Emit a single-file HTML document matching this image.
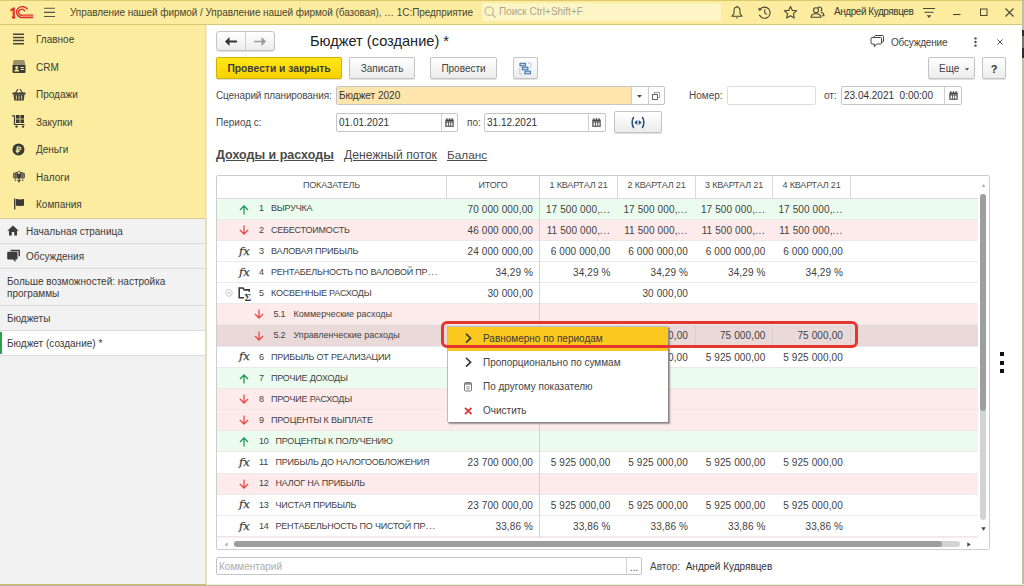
<!DOCTYPE html>
<html lang="ru">
<head>
<meta charset="utf-8">
<title>Бюджет (создание) * — 1С:Предприятие</title>
<style>
*{box-sizing:border-box;margin:0;padding:0}
html,body{width:1024px;height:586px;overflow:hidden;background:#fff}
body{font-family:"Liberation Sans",sans-serif;font-size:10px;color:#3a3a3a;position:relative}
.abs{position:absolute}
.t{position:absolute;white-space:nowrap;line-height:12px}
/* window frame */
#frame-top{left:0;top:0;width:1024px;height:1px;background:#dbc96f}
#frame-right{left:1022px;top:0;width:2px;height:586px;background:#bdbfa8}
#frame-bottom{left:0;top:584px;width:1024px;height:2px;background:#b7baa3;border-top:1px solid #f1ecd2}
/* title bar */
#titlebar{left:0;top:0;width:1022px;height:25px;background:#fbec9f;border-bottom:1px solid #d9c873;border-top:1px solid #d9cc85}
#search{left:482px;top:3px;width:239px;height:18px;background:#fdf5c6;border-radius:2px}
/* sidebar */
#sections{left:0;top:25px;width:207px;height:193px;background:#fbec9f;border-right:1px solid #f2edd6;box-shadow:inset -1px 0 0 #eedd92}
#sideborder{left:205px;top:218px;width:2px;height:366px;background:#e6dfba}
#panel{left:0;top:218px;width:205px;height:366px;background:#f2f2f2;border-top:1px solid #d5cf9c}
.sec{position:absolute;left:36px;white-space:nowrap;line-height:12px;color:#3d3d33}
.pi{position:absolute;left:0;width:205px;border-bottom:1px solid #dcdcdc;color:#3a3a3a}
.pi span{position:absolute;white-space:nowrap;line-height:12px}
/* main */
.btn{position:absolute;border:1px solid #c3c3c3;border-radius:2px;background:linear-gradient(#ffffff,#ececec);box-shadow:0 1px 0 rgba(0,0,0,.12);text-align:center;color:#444;white-space:nowrap}
.inp{position:absolute;border:1px solid #c5c5c5;border-radius:2px;background:#fff}
.lbl{position:absolute;white-space:nowrap;line-height:12px;color:#4a4a4a}
/* table */
#grid{left:216px;top:175px;width:774px;height:375px;border-radius:2px;border:1px solid #cdcdcd;background:#fff;overflow:hidden}
.row{position:absolute;left:0;width:761px;border-bottom:1px solid #ebe9e9}
.g{background:#ebfcee}
.p{background:#fdeaea}
.s{background:#e9d9d9}
.hd{position:absolute;top:0;height:22px;line-height:19px;font-size:9px;letter-spacing:-.15px;color:#4d4d4d;text-align:center;border-right:1px solid #d9d9d9;white-space:nowrap}
.lc{letter-spacing:0!important}
.nm i{font-style:normal;letter-spacing:.9px;margin-left:.5px}
.nm{position:absolute;font-size:9px;letter-spacing:-.2px;line-height:12px;white-space:nowrap;color:#424242}
.num i{font-style:normal;letter-spacing:.7px}
.num{position:absolute;font-size:10px;letter-spacing:.12px;line-height:12px;white-space:nowrap;text-align:right;color:#424242}
.vl{position:absolute;width:1px;background:#d4d4d4}
.ic{position:absolute}
.fx{font-family:"DejaVu Serif","Liberation Serif",serif;font-style:italic;font-size:11.5px;line-height:16px;color:#3c3c3c;letter-spacing:0;-webkit-text-stroke:.25px #3c3c3c}
/* menu */
#menu{left:447px;top:326px;width:221px;height:96px;background:#fff;border:1px solid #b9bcc0;border-right:0;border-bottom:0;box-shadow:1.5px 1.5px 0 #8d8789,2px 2px 2px rgba(0,0,0,.25)}
.mi{position:absolute;left:35px;white-space:nowrap;line-height:12px;color:#444}
</style>
</head>
<body>

<!-- ===== title bar ===== -->
<div id="titlebar" class="abs"></div>
<div id="search" class="abs"></div>
<svg class="abs" style="left:9px;top:5.8px" width="26" height="13.2" viewBox="0 0 26 14" preserveAspectRatio="none">
  <clipPath id="one"><path d="M0 0H8V10.5H6.2V14H2.9V10.5H0z"/></clipPath>
  <text x=".4" y="12.8" clip-path="url(#one)" style="font-family:'Liberation Sans',sans-serif;font-size:16px" fill="#e0302c" stroke="#e0302c" stroke-width=".9" textLength="8" lengthAdjust="spacingAndGlyphs">1</text>
  <g fill="none" stroke="#df2a2a" stroke-width="1.35">
    <path d="M15.8 5.6 A3.2 3.2 0 1 0 13.4 9.7 H24.2"/>
    <path d="M18.6 3.6 A5.9 5.9 0 1 0 13.4 12.4 H24.2"/>
  </g>
  <rect x="13.4" y="10.4" width="10.8" height="1.3" fill="#f0906a"/>
</svg>
<svg class="abs" style="left:44px;top:7px" width="12" height="11" viewBox="0 0 12 11"><path d="M0 1.2H11M0 5.4H11M0 9.5H11" stroke="#55554a" stroke-width="1.1"/></svg>
<div class="t" style="left:70px;top:7px;font-size:10px;letter-spacing:-.065px;color:#4a4632">Управление нашей фирмой / Управление нашей фирмой (базовая), … 1С:Предприятие</div>
<svg class="abs" style="left:484px;top:6px" width="13" height="13" viewBox="0 0 13 13"><circle cx="5.2" cy="5.2" r="4.2" fill="none" stroke="#b9b397" stroke-width="1.1"/><path d="M8.3 8.3L11.6 11.6" stroke="#b9b397" stroke-width="1.3"/></svg>
<div class="t" style="left:499px;top:6px;color:#aaa58c">Поиск Ctrl+Shift+F</div>
<!-- bell -->
<svg class="abs" style="left:730px;top:5px" width="14" height="15" viewBox="0 0 14 15"><path d="M7 2C5 2 4 3.7 4 5.7v2.8L1.9 11.3h10.2L10 8.5V5.7C10 3.7 9 2 7 2z" fill="none" stroke="#4a4636" stroke-width="1.1" stroke-linejoin="round"/><path d="M5.6 12.5h2.8L7 13.8z" fill="#4a4636"/><circle cx="7" cy="1.5" r=".7" fill="#4a4636"/></svg>
<!-- history -->
<svg class="abs" style="left:757px;top:5px" width="15" height="15" viewBox="0 0 15 15"><path d="M3.1 4.2A5.6 5.6 0 1 1 2.3 9.8" fill="none" stroke="#4a4636" stroke-width="1.1"/><path d="M1.2 2.4l.6 3.4 3.3-.9z" fill="#4a4636"/><path d="M7.7 4.3V7.9l2.3 1.5" fill="none" stroke="#4a4636" stroke-width="1.1"/></svg>
<!-- star -->
<svg class="abs" style="left:783px;top:5px" width="15" height="15" viewBox="0 0 15 15"><path d="M7.5 1.4l1.8 4 4.3.4-3.2 2.9.9 4.3-3.8-2.2-3.8 2.2.9-4.3L1.4 5.8l4.3-.4z" fill="none" stroke="#4a4636" stroke-width="1.1" stroke-linejoin="round"/></svg>
<!-- users -->
<svg class="abs" style="left:810px;top:5px" width="15" height="15" viewBox="0 0 15 15"><g fill="none" stroke="#4a4636" stroke-width="1.1"><path d="M7.7 2.9a2.3 2.3 0 1 1 3 3.4M11 7.2c1.9.4 2.9 1.6 3 3.6H11.8"/><circle cx="6" cy="5.3" r="2.5"/><path d="M1 12.2c.2-2.3 1.8-3.5 5-3.5s4.8 1.2 5 3.5z"/></g></svg>
<div class="t" style="left:834px;top:6px;letter-spacing:-.45px;color:#3d3a2c">Андрей Кудрявцев</div>
<!-- menu lines -->
<svg class="abs" style="left:923px;top:7px" width="12" height="12" viewBox="0 0 13 13"><path d="M0 1.7H13M1.5 5.7H11.5" stroke="#4a4636" stroke-width="1.1"/><path d="M4 9l2.5 2.8L9 9z" fill="#4a4636"/></svg>
<svg class="abs" style="left:952px;top:6px" width="9" height="13" viewBox="0 0 9 13"><path d="M1 8.5H8.5" stroke="#4a4636" stroke-width="1.1"/></svg>
<svg class="abs" style="left:979px;top:8px" width="9" height="9" viewBox="0 0 9 9"><rect x="1.5" y="1" width="6.5" height="6.5" fill="none" stroke="#4a4636" stroke-width="1"/></svg>
<svg class="abs" style="left:1004px;top:7px" width="11" height="11" viewBox="0 0 11 11"><path d="M1.5 1.5l8 8M9.5 1.5l-8 8" stroke="#4a4636" stroke-width="1.1"/></svg>

<!-- ===== sidebar ===== -->
<div id="sections" class="abs"></div>
<div id="panel" class="abs"></div>
<div id="sideborder" class="abs"></div>

<div class="sec" style="top:34px">Главное</div>
<div class="sec" style="top:61.5px">CRM</div>
<div class="sec" style="top:89px">Продажи</div>
<div class="sec" style="top:116.5px">Закупки</div>
<div class="sec" style="top:144px">Деньги</div>
<div class="sec" style="top:171.5px">Налоги</div>
<div class="sec" style="top:199px">Компания</div>

<!-- section icons -->
<svg class="abs" style="left:12px;top:33px" width="13" height="13" viewBox="0 0 13 13"><path d="M1 1.2H12M1 4.4H12M1 7.6H12M1 10.8H12" stroke="#44443a" stroke-width="1.5"/></svg>
<svg class="abs" style="left:12px;top:60px" width="14" height="14" viewBox="0 0 14 14"><path d="M1.5 1H12.5M1 3H13" stroke="#3b3b36" stroke-width="1"/><rect x="0.5" y="4.5" width="13" height="8.5" rx="1" fill="#3b3b36"/><circle cx="4.7" cy="7.6" r="1.4" fill="#fbec9f"/><path d="M2.3 11.6c0-1.6 1-2.3 2.4-2.3s2.4.7 2.4 2.3z" fill="#fbec9f"/><path d="M8.5 7.5H11.8M8.5 9.5H11.8" stroke="#fbec9f" stroke-width="1"/></svg>
<svg class="abs" style="left:12px;top:88px" width="14" height="13" viewBox="0 0 14 13"><path d="M3.5 5L6 1M10.5 5L8 1" stroke="#3b3b36" stroke-width="1.1" fill="none"/><rect x="0.5" y="4.5" width="13" height="2" fill="#3b3b36"/><path d="M1.5 6.5H12.5L11.7 12.5H2.3z" fill="#3b3b36"/><path d="M4.3 7.5V11.5M7 7.5V11.5M9.7 7.5V11.5" stroke="#fbec9f" stroke-width=".9"/></svg>
<svg class="abs" style="left:12px;top:115px" width="14" height="13" viewBox="0 0 14 13"><path d="M0 .8H2.5V9.5H12.5" fill="none" stroke="#3b3b36" stroke-width="1.2"/><rect x="4" y="0" width="3.6" height="3.6" fill="#3b3b36"/><rect x="8.4" y="0" width="3.6" height="3.6" fill="#3b3b36"/><rect x="4" y="4.4" width="3.6" height="3.6" fill="#3b3b36"/><rect x="8.4" y="4.4" width="3.6" height="3.6" fill="#3b3b36"/><circle cx="4.5" cy="11.6" r="1.2" fill="#3b3b36"/><circle cx="11" cy="11.6" r="1.2" fill="#3b3b36"/></svg>
<svg class="abs" style="left:12px;top:143px" width="13" height="13" viewBox="0 0 13 13"><circle cx="6.5" cy="6.5" r="6" fill="#3b3b36"/><text x="4" y="10" font-family="Liberation Sans, sans-serif" font-weight="bold" font-size="9" fill="#fbec9f">₽</text></svg>
<svg class="abs" style="left:13px;top:170px" width="12" height="13" viewBox="0 0 12 13"><g fill="#3f3f3a"><path d="M6 .4l.9 1L6 2.3l-.9-.9z"/><circle cx="4.1" cy="2.7" r="1.050"/><circle cx="7.9" cy="2.7" r="1.050"/><path d="M5.3 4.6C4 2.3 1.2 2 .2 3.5V7.8c.9 1 2.1 1.2 3.3.8L5.3 7.2z"/><path d="M6.7 4.6C8 2.3 10.8 2 11.8 3.5V7.8c-.9 1-2.1 1.2-3.3.8L6.7 7.2z"/><ellipse cx="6" cy="6.5" rx="1.5" ry="3"/><path d="M3.6 9.3L6 12.8 8.400 9.3 6 10.2z"/><circle cx="2.3" cy="10.3" r=".75"/><circle cx="9.7" cy="10.3" r=".75"/></g><path d="M1.7 3.3V8.2M3.2 3.2V8.6M10.3 3.3V8.2M8.8 3.2V8.6" stroke="#fbec9f" stroke-width=".45"/></svg>
<svg class="abs" style="left:13px;top:198px" width="12" height="12" viewBox="0 0 12 12"><path d="M1.7 .5V11.500" stroke="#3b3b36" stroke-width="1.3"/><path d="M2.9 1.2c1.800-.9 3.2.7 5 .3S10.2.8 11 1.2V8c-.8-.4-1.7-.4-3.1 0S4.7 7.2 2.9 8z" fill="#3b3b36"/></svg>

<!-- open windows panel -->
<div class="pi" style="top:219px;height:25px"><span style="left:26px;top:7px">Начальная страница</span></div>
<div class="pi" style="top:244px;height:25px"><span style="left:26px;top:7px">Обсуждения</span></div>
<div class="pi" style="top:269px;height:37px"><span style="left:7px;top:7px">Больше возможностей: настройка</span><span style="left:7px;top:19px">программы</span></div>
<div class="pi" style="top:306px;height:25px"><span style="left:7px;top:7px">Бюджеты</span></div>
<div class="pi" style="top:331px;height:25px;background:#fff"><span style="left:7px;top:7px">Бюджет (создание) *</span></div>
<div class="abs" style="left:0;top:332px;width:2px;height:22px;background:#2ca04a"></div>
<svg class="abs" style="left:7px;top:225px" width="12" height="11" viewBox="0 0 12 11"><path d="M6 .5L.3 5.8H2V10.5H4.8V7H7.2V10.5H10V5.8H11.7z" fill="#3d3d3d"/></svg>
<svg class="abs" style="left:7px;top:249px" width="14" height="14" viewBox="0 0 14 14"><path d="M3.5 .8H12Q13 .8 13 1.8V6.5Q13 7.5 12 7.5H11.5V2.3H3.5z" fill="#3d3d3d"/><path d="M1.2 2.8H9.5Q10.5 2.8 10.5 3.8V9.5Q10.5 10.5 9.5 10.5H8.5V13L6 10.5H1.2Q.2 10.5 .2 9.5V3.8Q.2 2.8 1.2 2.8z" fill="#3d3d3d"/></svg>

<!-- ===== main area ===== -->
<!-- nav buttons -->
<div class="btn" style="left:216px;top:31px;width:59px;height:20px;border-radius:3px"></div>
<div class="abs" style="left:245px;top:32px;width:1px;height:18px;background:#d0d0d0"></div>
<svg class="abs" style="left:225px;top:37px" width="12" height="9" viewBox="0 0 12 9"><path d="M4.5 0L0 4.5 4.5 9V5.5H12V3.5H4.5z" fill="#333"/></svg>
<svg class="abs" style="left:254px;top:37px" width="12" height="9" viewBox="0 0 12 9"><path d="M7.5 0L12 4.5 7.5 9V5.3H0V3.7H7.5z" fill="#9a9a9a"/></svg>
<div class="t" style="left:310px;top:32px;font-size:14.6px;line-height:18px;color:#222">Бюджет (создание) *</div>

<!-- discuss / more / close -->
<svg class="abs" style="left:870px;top:35px" width="15" height="13" viewBox="0 0 15 13"><g fill="none" stroke="#444" stroke-width="1"><path d="M4.5 2.5V1.5Q4.5 .5 5.5 .5H12.5Q13.5 .5 13.5 1.5V6Q13.5 7 12.5 7H12"/><path d="M2 2.5H10.5Q11.5 2.5 11.5 3.5V8Q11.5 9 10.5 9H6.5L4.300 11.8V9H2Q1 9 1 8V3.5Q1 2.5 2 2.5z" fill="#fff"/></g></svg>
<div class="t" style="left:891px;top:37px;letter-spacing:-.2px;color:#444">Обсуждение</div>
<svg class="abs" style="left:974px;top:37px" width="3" height="10" viewBox="0 0 3 10"><circle cx="1.5" cy="1.4" r="1.2" fill="#4a4a4a"/><circle cx="1.5" cy="5" r="1.2" fill="#4a4a4a"/><circle cx="1.5" cy="8.6" r="1.2" fill="#4a4a4a"/></svg>
<svg class="abs" style="left:997px;top:39px" width="6" height="6" viewBox="0 0 6 6"><path d="M.4.4l5.2 5.2M5.6.4l-5.2 5.2" stroke="#555" stroke-width="1"/></svg>

<!-- command bar -->
<div class="btn" style="left:216px;top:57px;width:126px;height:22px;line-height:22px;font-weight:bold;font-size:10.3px;color:#3b3b3b;background:linear-gradient(#ffe81a,#f7d000);border-color:#d2b100">Провести и закрыть</div>
<div class="btn" style="left:349px;top:57px;width:66px;height:22px;line-height:22px">Записать</div>
<div class="btn" style="left:430px;top:57px;width:67px;height:22px;line-height:22px">Провести</div>
<div class="btn" style="left:513px;top:57px;width:25px;height:22px"></div>
<svg class="abs" style="left:519px;top:62px" width="13" height="13" viewBox="0 0 13 13"><g fill="#c9dcee" stroke="#3a6fa6" stroke-width="1"><rect x="1" y="1.3" width="5.6" height="2.6"/><rect x="3.3" y="5.2" width="5.6" height="2.6"/><rect x="5.8" y="9.2" width="5.6" height="2.6"/></g><path d="M9 1H11.8V6M.8 6V12H3.5" fill="none" stroke="#8fb3d6" stroke-width=".9" stroke-dasharray="1.5 .7"/></svg>
<div class="btn" style="left:928px;top:57px;width:47px;height:22px;line-height:22px;text-align:left;padding-left:10px">Еще</div>
<svg class="abs" style="left:965px;top:68px" width="4" height="3" viewBox="0 0 4 3"><path d="M0 .3H4L2 2.5z" fill="#444"/></svg>
<div class="btn" style="left:982px;top:57px;width:24px;height:22px;line-height:22px;font-weight:bold;font-size:11px;color:#333">?</div>

<!-- row 1 -->
<div class="lbl" style="left:216px;top:90px;letter-spacing:-.11px">Сценарий планирования:</div>
<div class="inp" style="left:336px;top:86px;width:329px;height:19px"></div>
<div class="abs" style="left:337px;top:87px;width:294px;height:17px;background:#fde5ab"></div>
<div class="t" style="left:339px;top:90px;color:#333">Бюджет 2020</div>
<div class="abs" style="left:631px;top:87px;width:1px;height:17px;background:#d0d0d0"></div>
<div class="abs" style="left:648px;top:87px;width:1px;height:17px;background:#d0d0d0"></div>
<svg class="abs" style="left:637px;top:95px" width="5" height="3" viewBox="0 0 5 3"><path d="M0 0H5L2.5 2.8z" fill="#444"/></svg>
<svg class="abs" style="left:652px;top:92px" width="8" height="8" viewBox="0 0 8 8"><rect x="2.5" y=".5" width="5" height="5" fill="#fff" stroke="#9a9a9a" stroke-width=".9"/><rect x=".5" y="2.5" width="5" height="5" fill="#fff" stroke="#555" stroke-width=".9"/></svg>
<div class="lbl" style="left:689px;top:90px">Номер:</div>
<div class="inp" style="left:727px;top:86px;width:89px;height:19px;border-color:#dcdcdc"></div>
<div class="lbl" style="left:824px;top:90px">от:</div>
<div class="inp" style="left:841px;top:86px;width:121px;height:19px"></div>
<div class="t" style="left:844px;top:90px;color:#333;white-space:pre">23.04.2021  0:00:00</div>
<div class="abs" style="left:944px;top:87px;width:1px;height:17px;background:#d0d0d0"></div>
<svg class="abs" style="left:949px;top:91px" width="9" height="9" viewBox="0 0 9 9"><path d="M.3 1.6H8.7V8.8H.3z" fill="#474747"/><path d="M1.9 .2V2M4.5 .2V2M7.1 .2V2" stroke="#474747" stroke-width="1.3"/><path d="M1.2 3.1H7.8V3.9H1.2z" fill="#8a8a8a"/><path d="M1.5 4.5H3V7.8H1.5zM3.8 4.5H5.3V7.8H3.8zM6.1 4.5H7.600V7.8H6.1z" fill="#f4f4f4"/></svg>

<!-- row 2 -->
<div class="lbl" style="left:216px;top:117px">Период с:</div>
<div class="inp" style="left:336px;top:113px;width:122px;height:19px"></div>
<div class="t" style="left:339px;top:117px;color:#333">01.01.2021</div>
<div class="abs" style="left:441px;top:114px;width:1px;height:17px;background:#d0d0d0"></div>
<svg class="abs" style="left:445px;top:118px" width="9" height="9" viewBox="0 0 9 9"><path d="M.3 1.6H8.7V8.8H.3z" fill="#474747"/><path d="M1.9 .2V2M4.5 .2V2M7.1 .2V2" stroke="#474747" stroke-width="1.3"/><path d="M1.2 3.1H7.8V3.9H1.2z" fill="#8a8a8a"/><path d="M1.5 4.5H3V7.8H1.5zM3.8 4.5H5.3V7.8H3.8zM6.1 4.5H7.600V7.8H6.1z" fill="#f4f4f4"/></svg>
<div class="lbl" style="left:467px;top:117px">по:</div>
<div class="inp" style="left:484px;top:113px;width:122px;height:19px"></div>
<div class="t" style="left:487px;top:117px;color:#333">31.12.2021</div>
<div class="abs" style="left:588px;top:114px;width:1px;height:17px;background:#d0d0d0"></div>
<svg class="abs" style="left:592px;top:118px" width="9" height="9" viewBox="0 0 9 9"><path d="M.3 1.6H8.7V8.8H.3z" fill="#474747"/><path d="M1.9 .2V2M4.5 .2V2M7.1 .2V2" stroke="#474747" stroke-width="1.3"/><path d="M1.2 3.1H7.8V3.9H1.2z" fill="#8a8a8a"/><path d="M1.5 4.5H3V7.8H1.5zM3.8 4.5H5.3V7.8H3.8zM6.1 4.5H7.600V7.8H6.1z" fill="#f4f4f4"/></svg>
<div class="btn" style="left:614px;top:111px;width:48px;height:22px"></div>
<svg class="abs" style="left:630px;top:116px" width="16" height="13" viewBox="0 0 16 13"><path d="M3.8 1C1.6 3.6 1.6 9.4 3.8 12M12.2 1C14.4 3.6 14.4 9.4 12.2 12" fill="none" stroke="#1f4e79" stroke-width="1.5"/><path d="M7.3 4V9L4.3 6.5zM8.7 4V9L11.7 6.5z" fill="#1f4e79"/></svg>

<!-- tabs -->
<div class="t" style="left:216px;top:148px;font-size:12.5px;line-height:15px;font-weight:bold;color:#4a4a4a;text-decoration:underline">Доходы и расходы</div>
<div class="t" style="left:344px;top:148px;font-size:12.2px;line-height:15px;color:#4a4a4a;text-decoration:underline">Денежный поток</div>
<div class="t" style="left:447px;top:148px;font-size:11.8px;line-height:15px;color:#4a4a4a;text-decoration:underline">Баланс</div>

<!-- ===== grid ===== -->
<div id="grid" class="abs">
<div id="gridbody">
<div class="hd" style="left:0px;width:230px">ПОКАЗАТЕЛЬ</div>
<div class="hd" style="left:230px;width:93px">ИТОГО</div>
<div class="hd" style="left:323px;width:78px">1 КВАРТАЛ 21</div>
<div class="hd" style="left:401px;width:78px">2 КВАРТАЛ 21</div>
<div class="hd" style="left:479px;width:77px">3 КВАРТАЛ 21</div>
<div class="hd" style="left:556px;width:78px">4 КВАРТАЛ 21</div>
<div class="abs" style="left:0;top:22px;width:761px;height:1px;background:#dcdcdc"></div>
<div class="row g" style="top:23px;height:21px">
<svg class="ic" style="left:22px;top:5.5px" width="10" height="10" viewBox="0 0 10 10"><path d="M5 9.5V1.2M1 5L5 1l4 4" fill="none" stroke="#1a9850" stroke-width="1.25"/></svg>
<span class="nm" style="left:42px;top:3px">1</span>
<span class="nm" style="left:54px;top:3px">ВЫРУЧКА</span>
<span class="num" style="right:445px;top:4.7px">70 000 000,00</span>
<span class="num" style="right:367.5px;top:4.7px">17 500 000,<i>...</i></span>
<span class="num" style="right:290px;top:4.7px">17 500 000,<i>...</i></span>
<span class="num" style="right:212.5px;top:4.7px">17 500 000,<i>...</i></span>
<span class="num" style="right:135px;top:4.7px">17 500 000,<i>...</i></span>
</div>
<div class="row p" style="top:44px;height:21px">
<svg class="ic" style="left:22px;top:5.1px" width="10" height="10" viewBox="0 0 10 10"><path d="M5 .5V8.8M1 5l4 4 4-4" fill="none" stroke="#ee4646" stroke-width="1.25"/></svg>
<span class="nm" style="left:42px;top:4px">2</span>
<span class="nm" style="left:54px;top:4px">СЕБЕСТОИМОСТЬ</span>
<span class="num" style="right:445px;top:4.7px">46 000 000,00</span>
<span class="num" style="right:367.5px;top:4.7px">11 500 000,<i>...</i></span>
<span class="num" style="right:290px;top:4.7px">11 500 000,<i>...</i></span>
<span class="num" style="right:212.5px;top:4.7px">11 500 000,<i>...</i></span>
<span class="num" style="right:135px;top:4.7px">11 500 000,<i>...</i></span>
</div>
<div class="row " style="top:65px;height:21px">
<span class="ic fx" style="left:22px;top:2px">fx</span>
<span class="nm" style="left:42px;top:4px">3</span>
<span class="nm" style="left:54px;top:4px">ВАЛОВАЯ ПРИБЫЛЬ</span>
<span class="num" style="right:445px;top:4.7px">24 000 000,00</span>
<span class="num" style="right:367.5px;top:4.7px">6 000 000,00</span>
<span class="num" style="right:290px;top:4.7px">6 000 000,00</span>
<span class="num" style="right:212.5px;top:4.7px">6 000 000,00</span>
<span class="num" style="right:135px;top:4.7px">6 000 000,00</span>
</div>
<div class="row " style="top:86px;height:21px">
<span class="ic fx" style="left:22px;top:2px">fx</span>
<span class="nm" style="left:42px;top:4px">4</span>
<span class="nm" style="left:54px;top:4px">РЕНТАБЕЛЬНОСТЬ ПО ВАЛОВОЙ ПР<i>...</i></span>
<span class="num" style="right:445px;top:4.7px">34,29 %</span>
<span class="num" style="right:367.5px;top:4.7px">34,29 %</span>
<span class="num" style="right:290px;top:4.7px">34,29 %</span>
<span class="num" style="right:212.5px;top:4.7px">34,29 %</span>
<span class="num" style="right:135px;top:4.7px">34,29 %</span>
</div>
<div class="row " style="top:107px;height:21px">
<svg class="ic" style="left:21px;top:4.1px" width="14" height="14" viewBox="0 0 14 14"><path d="M6 10.8H1.2V1H5l1.3 1.9H11.2V4.8" fill="none" stroke="#3a3a3a" stroke-width="1.6"/><text x="6.6" y="13.7" font-family="Liberation Serif, serif" font-weight="bold" font-size="10" fill="#3a3a3a">Σ</text></svg>
<svg class="ic" style="left:7.5px;top:6px" width="8" height="8" viewBox="0 0 8 8"><circle cx="4" cy="4" r="3.3" fill="#fff" stroke="#c4c4c4" stroke-width=".9"/><path d="M2.3 4H5.7" stroke="#b0b0b0" stroke-width=".9"/></svg>
<span class="nm" style="left:42px;top:4px">5</span>
<span class="nm" style="left:54px;top:4px">КОСВЕННЫЕ РАСХОДЫ</span>
<span class="num" style="right:445px;top:4.7px">30 000,00</span>
<span class="num" style="right:290px;top:4.7px">30 000,00</span>
</div>
<div class="row p" style="top:128px;height:21px">
<svg class="ic" style="left:36.5px;top:5.1px" width="10" height="10" viewBox="0 0 10 10"><path d="M5 .5V8.8M1 5l4 4 4-4" fill="none" stroke="#ee4646" stroke-width="1.25"/></svg>
<span class="nm" style="left:56.5px;top:4px">5.1</span>
<span class="nm lc" style="left:76.5px;top:4px">Коммерческие расходы</span>
</div>
<div class="row s" style="top:149px;height:22px">
<svg class="ic" style="left:36.5px;top:5.6px" width="10" height="10" viewBox="0 0 10 10"><path d="M5 .5V8.8M1 5l4 4 4-4" fill="none" stroke="#ee4646" stroke-width="1.25"/></svg>
<span class="nm" style="left:56.5px;top:4px">5.2</span>
<span class="nm lc" style="left:76.5px;top:4px">Управленческие расходы</span>
<span class="num" style="right:290px;top:5.2px">75 000,00</span>
<span class="num" style="right:212.5px;top:5.2px">75 000,00</span>
<span class="num" style="right:135px;top:5.2px">75 000,00</span>
<div class="vl" style="left:400px;top:0;height:21px;background:#dccccc"></div>
<div class="vl" style="left:478px;top:0;height:21px;background:#dccccc"></div>
<div class="vl" style="left:555px;top:0;height:21px;background:#dccccc"></div>
<div class="vl" style="left:633px;top:0;height:21px;background:#dccccc"></div>
</div>
<div class="row " style="top:171px;height:21px">
<span class="ic fx" style="left:22px;top:1px">fx</span>
<span class="nm" style="left:42px;top:4px">6</span>
<span class="nm" style="left:54px;top:4px">ПРИБЫЛЬ ОТ РЕАЛИЗАЦИИ</span>
<span class="num" style="right:290px;top:4.7px">5 925 000,00</span>
<span class="num" style="right:212.5px;top:4.7px">5 925 000,00</span>
<span class="num" style="right:135px;top:4.7px">5 925 000,00</span>
</div>
<div class="row g" style="top:192px;height:21px">
<svg class="ic" style="left:22px;top:5.5px" width="10" height="10" viewBox="0 0 10 10"><path d="M5 9.5V1.2M1 5L5 1l4 4" fill="none" stroke="#1a9850" stroke-width="1.25"/></svg>
<span class="nm" style="left:42px;top:4px">7</span>
<span class="nm" style="left:54px;top:4px">ПРОЧИЕ ДОХОДЫ</span>
</div>
<div class="row p" style="top:213px;height:21px">
<svg class="ic" style="left:22px;top:5.1px" width="10" height="10" viewBox="0 0 10 10"><path d="M5 .5V8.8M1 5l4 4 4-4" fill="none" stroke="#ee4646" stroke-width="1.25"/></svg>
<span class="nm" style="left:42px;top:4px">8</span>
<span class="nm" style="left:54px;top:4px">ПРОЧИЕ РАСХОДЫ</span>
</div>
<div class="row p" style="top:234px;height:21px">
<svg class="ic" style="left:22px;top:5.1px" width="10" height="10" viewBox="0 0 10 10"><path d="M5 .5V8.8M1 5l4 4 4-4" fill="none" stroke="#ee4646" stroke-width="1.25"/></svg>
<span class="nm" style="left:42px;top:4px">9</span>
<span class="nm" style="left:54px;top:4px">ПРОЦЕНТЫ К ВЫПЛАТЕ</span>
</div>
<div class="row g" style="top:255px;height:21px">
<svg class="ic" style="left:22px;top:5.5px" width="10" height="10" viewBox="0 0 10 10"><path d="M5 9.5V1.2M1 5L5 1l4 4" fill="none" stroke="#1a9850" stroke-width="1.25"/></svg>
<span class="nm" style="left:42px;top:4px">10</span>
<span class="nm" style="left:58.5px;top:4px">ПРОЦЕНТЫ К ПОЛУЧЕНИЮ</span>
</div>
<div class="row " style="top:276px;height:22px">
<span class="ic fx" style="left:22px;top:2px">fx</span>
<span class="nm" style="left:42px;top:4px">11</span>
<span class="nm" style="left:58.5px;top:4px">ПРИБЫЛЬ ДО НАЛОГООБЛОЖЕНИЯ</span>
<span class="num" style="right:445px;top:5.2px">23 700 000,00</span>
<span class="num" style="right:367.5px;top:5.2px">5 925 000,00</span>
<span class="num" style="right:290px;top:5.2px">5 925 000,00</span>
<span class="num" style="right:212.5px;top:5.2px">5 925 000,00</span>
<span class="num" style="right:135px;top:5.2px">5 925 000,00</span>
</div>
<div class="row p" style="top:298px;height:21px">
<svg class="ic" style="left:22px;top:5.1px" width="10" height="10" viewBox="0 0 10 10"><path d="M5 .5V8.8M1 5l4 4 4-4" fill="none" stroke="#ee4646" stroke-width="1.25"/></svg>
<span class="nm" style="left:42px;top:3px">12</span>
<span class="nm" style="left:58.5px;top:3px">НАЛОГ НА ПРИБЫЛЬ</span>
</div>
<div class="row " style="top:319px;height:21px">
<span class="ic fx" style="left:22px;top:1px">fx</span>
<span class="nm" style="left:42px;top:4px">13</span>
<span class="nm" style="left:58.5px;top:4px">ЧИСТАЯ ПРИБЫЛЬ</span>
<span class="num" style="right:445px;top:4.7px">23 700 000,00</span>
<span class="num" style="right:367.5px;top:4.7px">5 925 000,00</span>
<span class="num" style="right:290px;top:4.7px">5 925 000,00</span>
<span class="num" style="right:212.5px;top:4.7px">5 925 000,00</span>
<span class="num" style="right:135px;top:4.7px">5 925 000,00</span>
</div>
<div class="row " style="top:340px;height:21px">
<span class="ic fx" style="left:22px;top:2px">fx</span>
<span class="nm" style="left:42px;top:4px">14</span>
<span class="nm" style="left:58.5px;top:4px">РЕНТАБЕЛЬНОСТЬ ПО ЧИСТОЙ ПР<i>...</i></span>
<span class="num" style="right:445px;top:4.7px">33,86 %</span>
<span class="num" style="right:367.5px;top:4.7px">33,86 %</span>
<span class="num" style="right:290px;top:4.7px">33,86 %</span>
<span class="num" style="right:212.5px;top:4.7px">33,86 %</span>
<span class="num" style="right:135px;top:4.7px">33,86 %</span>
</div>
<div class="row p" style="top:361px;height:21px">
</div>
<div class="vl" style="left:322px;top:0;height:362px"></div>
<svg class="abs" style="left:764px;top:8px" width="5" height="3" viewBox="0 0 5 3"><path d="M2.5 0L4.5 3H.5z" fill="#b5b5b5"/></svg>
<div class="abs" style="left:763px;top:18px;width:6px;height:326px;border-radius:3px;background:#d3d3d3"></div>
<div class="abs" style="left:763px;top:18px;width:6px;height:217px;border-radius:3px;background:#9e9e9e"></div>
<svg class="abs" style="left:764px;top:351px" width="5" height="4" viewBox="0 0 5 4"><path d="M.3 .3H4.7L2.5 3.7z" fill="#444"/></svg>
<div class="abs" style="left:0;top:362px;width:772px;height:11px;background:#fff"></div>
<svg class="abs" style="left:7px;top:366px" width="4" height="5" viewBox="0 0 4 5"><path d="M3.7 .3V4.7L.3 2.5z" fill="#bcbcbc"/></svg>
<div class="abs" style="left:17px;top:365px;width:726px;height:6px;border-radius:3px;background:#d3d3d3"></div>
<div class="abs" style="left:17px;top:365px;width:708px;height:6px;border-radius:3px;background:#9e9e9e"></div>
<svg class="abs" style="left:750px;top:366px" width="4" height="5" viewBox="0 0 4 5"><path d="M.3 .3V4.7L3.7 2.5z" fill="#444"/></svg>
</div><!--/gridbody-->
</div>


<!-- ===== context menu ===== -->
<div id="menu" class="abs">
  <div class="abs" style="left:0;top:0;width:220px;height:24px;background:#fbc81f"></div>
  <svg class="abs" style="left:16.5px;top:6px" width="8" height="11" viewBox="0 0 8 11"><path d="M1 .8l4.6 4.4L1 9.6" fill="none" stroke="#3d3d3d" stroke-width="1.7"/></svg>
  <div class="mi" style="top:6px;color:#3a3a3a">Равномерно по периодам</div>
  <svg class="abs" style="left:16.5px;top:30px" width="8" height="11" viewBox="0 0 8 11"><path d="M1 .8l4.6 4.4L1 9.6" fill="none" stroke="#3d3d3d" stroke-width="1.7"/></svg>
  <div class="mi" style="top:30px">Пропорционально по суммам</div>
  <svg class="abs" style="left:15.5px;top:54.5px" width="8" height="10" viewBox="0 0 8 10"><rect x=".5" y=".5" width="7" height="8.5" rx="1" fill="#fff" stroke="#6a6a6a" stroke-width=".9"/><rect x=".8" y=".8" width="6.4" height="1.9" fill="#8a8a8a"/><path d="M2 4.8H6M2 6.8H6M4 3.8V8" stroke="#a5a5a5" stroke-width=".8"/></svg>
  <div class="mi" style="top:54px">По другому показателю</div>
  <svg class="abs" style="left:15.5px;top:79.5px" width="9" height="8" viewBox="0 0 9 8"><path d="M1 .8l6.5 6.4M7.5 .8L1 7.2" stroke="#e23434" stroke-width="1.8"/></svg>
  <div class="mi" style="top:78px">Очистить</div>
</div>
<div class="abs" style="left:441px;top:321px;width:417px;height:27px;border:3px solid #e4362e;border-radius:6px"></div>

<!-- bottom -->
<div class="inp" style="left:216px;top:557px;width:426px;height:18px"></div>
<div class="t" style="left:219px;top:561px;color:#adadad">Комментарий</div>
<div class="abs" style="left:626px;top:558px;width:1px;height:16px;background:#d0d0d0"></div>
<div class="t" style="left:630px;top:562px;color:#444">...</div>
<div class="lbl" style="left:650px;top:561px;white-space:pre">Автор:  <span style="color:#333">Андрей Кудрявцев</span></div>

<div class="abs" style="left:1000px;top:352px;width:4px;height:4px;background:#111"></div>
<div class="abs" style="left:1000px;top:361px;width:4px;height:4px;background:#111"></div>
<div class="abs" style="left:1000px;top:369px;width:4px;height:4px;background:#111"></div>

<div id="frame-top" class="abs"></div>
<div id="frame-right" class="abs"></div>
<div class="abs" style="left:1022px;top:30px;width:2px;height:28px;background:#77776a"></div>
<div class="abs" style="left:1022px;top:30px;width:2px;height:6px;background:#2e2e2a"></div>
<div class="abs" style="left:1022px;top:48px;width:2px;height:10px;background:#2e2e2a"></div>
<div id="frame-bottom" class="abs"></div>
<div class="abs" style="left:0;top:584px;width:206px;height:1px;background:#ccbc62"></div>
</body>
</html>
